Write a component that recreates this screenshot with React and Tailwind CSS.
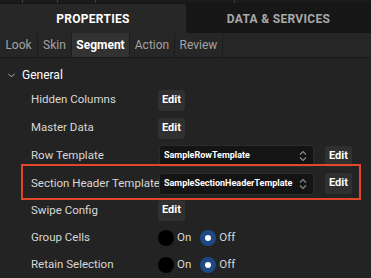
import { ChevronDown } from 'lucide-react';

function EditButton({ className = '' }) {
  return (
    <button className={`h-[21px] w-[27px] shrink-0 rounded-[3px] bg-[#303030] text-[11px] font-bold text-white flex items-center justify-center ${className}`}>
      Edit
    </button>
  );
}

function Select({ value }) {
  return (
    <div className="h-[22px] w-[155px] shrink-0 rounded-[3px] bg-[#141414] border border-[#2c2c2c] flex items-center justify-between pl-[4px] pr-[6px]">
      <span className="text-[9px] font-bold text-white whitespace-nowrap">{value}</span>
      <svg width="8" height="12" viewBox="0 0 8 12" fill="none" stroke="#8a8a8a" strokeWidth="1.2">
        <path d="M1 4.5 L4 1.5 L7 4.5" />
        <path d="M1 7.5 L4 10.5 L7 7.5" />
      </svg>
    </div>
  );
}

function Radio({ checked, label }) {
  return (
    <div className="flex items-center gap-[3px]">
      {checked ? (
        <div className="h-[16px] w-[16px] rounded-full bg-[#1d4a85] flex items-center justify-center">
          <div className="h-[6px] w-[6px] rounded-full bg-white" />
        </div>
      ) : (
        <div className="h-[16px] w-[16px] rounded-full bg-black" />
      )}
      <span className="text-[11.5px] text-[#d6d6d6]">{label}</span>
    </div>
  );
}

function Row({ label, height, children }) {
  return (
    <div className={`flex items-center ${height}`}>
      <span className="w-[127px] shrink-0 whitespace-nowrap text-[11.5px] text-[#d8d8d8]">{label}</span>
      {children}
    </div>
  );
}

const subTabs = ['Look', 'Skin', 'Segment', 'Action', 'Review'];
const subWidths = ['w-[38px]', 'w-[34px]', 'w-[58px]', 'w-[45px]', 'w-[48px]'];

export default function App() {
  return (
    <div className="w-[371px] h-[278px] overflow-hidden bg-[#232323] font-['Roboto',sans-serif]">
      {/* top strip */}
      <div className="h-[4px] bg-[#1b1b1b] flex border-b border-[#151515]">
        <div className="w-[23px] border-r border-[#3a3a3a]" />
        <div className="w-[35px] border-r border-[#3a3a3a]" />
        <div className="w-[38px] border-r border-[#3a3a3a]" />
        <div className="w-[139px] border-r border-[#3a3a3a]" />
      </div>

      {/* main tabs */}
      <div className="flex h-[29px]">
        <div className="w-[186px] bg-[#272727] flex items-center justify-center pt-[1px] text-[12px] font-bold text-white tracking-[0.3px]">
          PROPERTIES
        </div>
        <div className="flex-1 bg-[#171717] flex items-center justify-center pt-[1px] text-[12px] font-bold text-[#a8a8a8] tracking-[0.3px]">
          DATA &amp; SERVICES
        </div>
      </div>

      {/* sub tabs */}
      <div className="flex h-[25px] bg-[#262626] border-b border-[#1a1a1a]">
        {subTabs.map((t, i) => (
          <div
            key={t}
            className={`${subWidths[i]} flex items-center justify-center text-[12px] border-r border-[#1c1c1c] ${
              t === 'Segment' ? 'bg-[#323232] text-white font-bold' : 'text-[#a3a3a3]'
            }`}
          >
            {t}
          </div>
        ))}
      </div>

      {/* General */}
      <div className="flex items-center h-[28px] pt-[6px] pl-[6px] gap-[5px]">
        <ChevronDown size={11} color="#bdbdbd" strokeWidth={2} />
        <span className="text-[12px] text-white">General</span>
      </div>

      <div className="pl-[31px]">
        <Row label="Hidden Columns" height="h-[28px]">
          <EditButton />
        </Row>
        <Row label="Master Data" height="h-[28px]">
          <EditButton />
        </Row>
        <Row label="Row Template" height="h-[28px]">
          <div className="ml-[1px]">
            <Select value="SampleRowTemplate" />
          </div>
          <EditButton className="ml-[11px]" />
        </Row>
        <div className="relative">
          <Row label="Section Header Template" height="h-[27px]">
            <div className="ml-[1px]">
              <Select value="SampleSectionHeaderTemplate" />
            </div>
            <EditButton className="ml-[11px]" />
          </Row>
          <div className="absolute left-[-10px] top-[-6px] w-[340px] h-[36px] border-2 border-[#e2472d] pointer-events-none" />
        </div>
        <Row label="Swipe Config" height="h-[27px]">
          <EditButton />
        </Row>
        <Row label="Group Cells" height="h-[27px]">
          <div className="flex items-center gap-[9px]">
            <Radio label="On" />
            <Radio checked label="Off" />
          </div>
        </Row>
        <Row label="Retain Selection" height="h-[28px]">
          <div className="flex items-center gap-[9px]">
            <Radio label="On" />
            <Radio checked label="Off" />
          </div>
        </Row>
      </div>
    </div>
  );
}
